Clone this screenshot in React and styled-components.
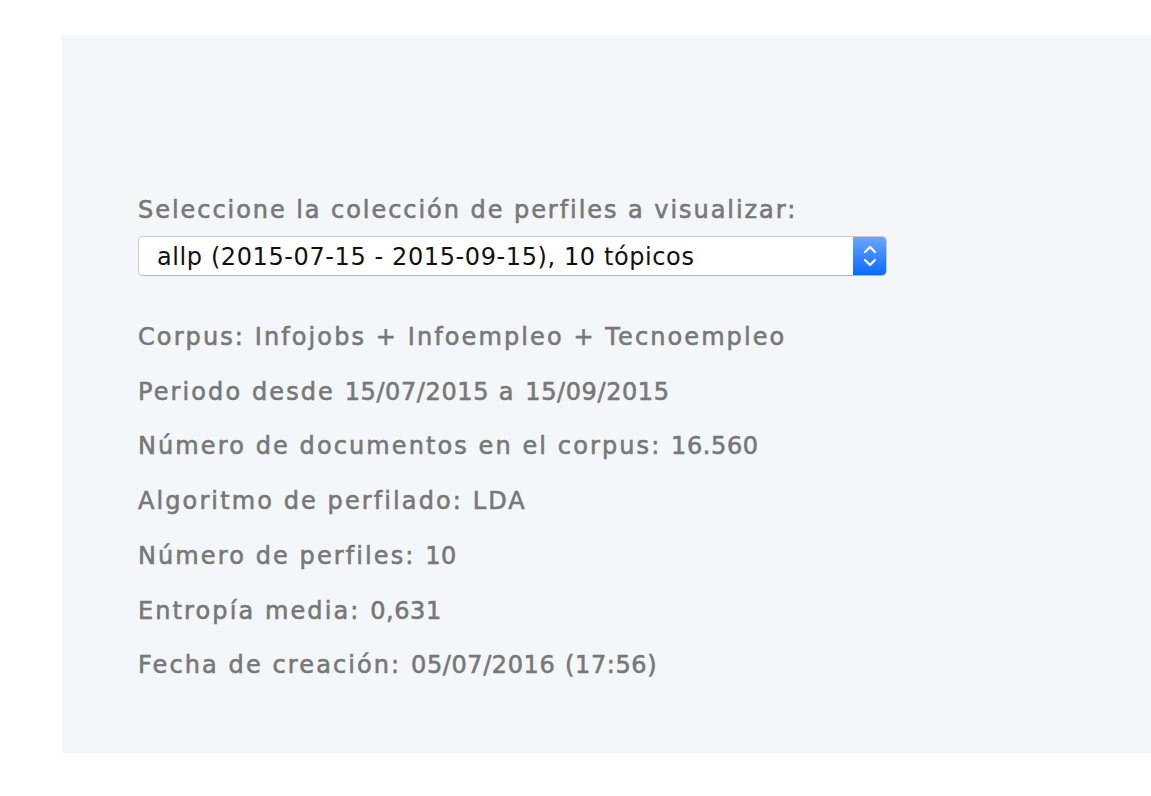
import styled, { createGlobalStyle } from "styled-components";

const GlobalStyle = createGlobalStyle`
  body {
    margin: 0;
    background: #ffffff;
    font-family: "DejaVu Sans", "Open Sans", sans-serif;
  }
`;

const Page = styled.div`
  padding: 35px 0 0 62px;
  height: 796px;
  box-sizing: border-box;
`;

const Panel = styled.section`
  background: #f4f7fa;
  height: 718px;
  box-sizing: border-box;
  padding: 160px 0 0 76px;
`;

const Label = styled.label`
  display: block;
  color: #787878;
  font-size: 24px;
  line-height: 30px;
  letter-spacing: 1.95px;
  -webkit-text-stroke: 0.6px #787878;
`;

const SelectBox = styled.div`
  display: flex;
  width: 749px;
  height: 40px;
  margin-top: 11px;
  box-sizing: border-box;
  border: 1px solid #c9c9c9;
  border-bottom-color: #b3b3b3;
  border-radius: 5px;
  background: #fff;
  overflow: hidden;
`;

const NativeSelect = styled.select`
  flex: 1;
  appearance: none;
  border: none;
  outline: none;
  background: transparent;
  padding: 2px 0 0 18px;
  font-family: "DejaVu Sans", "Open Sans", sans-serif;
  font-size: 24px;
  color: #111;
  letter-spacing: 0.6px;
`;

const Stepper = styled.div`
  width: 33px;
  display: flex;
  align-items: center;
  justify-content: center;
  background: linear-gradient(#6aa6ff, #0a6bff);
`;

const InfoList = styled.div`
  margin-top: 34px;
`;

const Info = styled.p`
  margin: 0;
  color: #787878;
  font-size: 24px;
  line-height: 54.7px;
  letter-spacing: 2.1px;
  -webkit-text-stroke: 0.6px #787878;
`;

// numbers are narrower in the original font
const Num = styled.span`
  letter-spacing: 0.6px;
`;

const lines = [
  "Corpus: Infojobs + Infoempleo + Tecnoempleo",
  "Periodo desde 15/07/2015 a 15/09/2015",
  "Número de documentos en el corpus: 16.560",
  "Algoritmo de perfilado: LDA",
  "Número de perfiles: 10",
  "Entropía media: 0,631",
  "Fecha de creación: 05/07/2016 (17:56)",
];

const withNumbers = (text) =>
  text.split(/(\(?\d[\d/.,:]*\)?)/).map((part, i) =>
    i % 2 ? <Num key={i}>{part}</Num> : part
  );

export default function App() {
  return (
    <Page>
      <GlobalStyle />
      <Panel>
        <Label htmlFor="coleccion">Seleccione la colección de perfiles a visualizar:</Label>
        <SelectBox>
          <NativeSelect id="coleccion" defaultValue="allp">
            <option value="allp">allp (2015-07-15 - 2015-09-15), 10 tópicos</option>
          </NativeSelect>
          <Stepper>
            <svg width="14" height="24" viewBox="0 0 14 24" fill="none" stroke="#fff" strokeWidth="2.2" strokeLinecap="round" strokeLinejoin="round">
              <path d="M2 8 L7 3 L12 8" />
              <path d="M2 16 L7 21 L12 16" />
            </svg>
          </Stepper>
        </SelectBox>
        <InfoList>
          {lines.map((t) => (
            <Info key={t}>{withNumbers(t)}</Info>
          ))}
        </InfoList>
      </Panel>
    </Page>
  );
}
